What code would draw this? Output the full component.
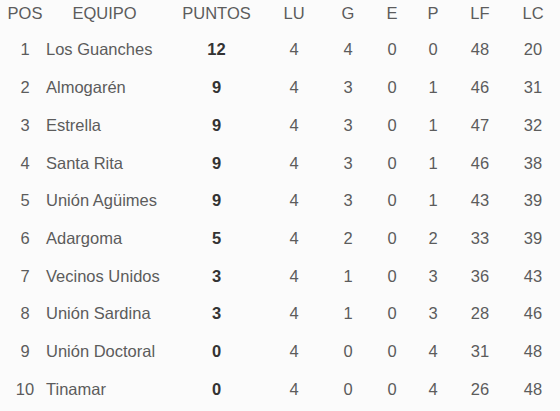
import React from "react";

type Row = {
  pos: number;
  team: string;
  pts: number;
  lu: number;
  g: number;
  e: number;
  p: number;
  lf: number;
  lc: number;
};

const rows: Row[] = [
  { pos: 1, team: "Los Guanches", pts: 12, lu: 4, g: 4, e: 0, p: 0, lf: 48, lc: 20 },
  { pos: 2, team: "Almogarén", pts: 9, lu: 4, g: 3, e: 0, p: 1, lf: 46, lc: 31 },
  { pos: 3, team: "Estrella", pts: 9, lu: 4, g: 3, e: 0, p: 1, lf: 47, lc: 32 },
  { pos: 4, team: "Santa Rita", pts: 9, lu: 4, g: 3, e: 0, p: 1, lf: 46, lc: 38 },
  { pos: 5, team: "Unión Agüimes", pts: 9, lu: 4, g: 3, e: 0, p: 1, lf: 43, lc: 39 },
  { pos: 6, team: "Adargoma", pts: 5, lu: 4, g: 2, e: 0, p: 2, lf: 33, lc: 39 },
  { pos: 7, team: "Vecinos Unidos", pts: 3, lu: 4, g: 1, e: 0, p: 3, lf: 36, lc: 43 },
  { pos: 8, team: "Unión Sardina", pts: 3, lu: 4, g: 1, e: 0, p: 3, lf: 28, lc: 46 },
  { pos: 9, team: "Unión Doctoral", pts: 0, lu: 4, g: 0, e: 0, p: 4, lf: 31, lc: 48 },
  { pos: 10, team: "Tinamar", pts: 0, lu: 4, g: 0, e: 0, p: 4, lf: 26, lc: 48 },
];

const cols =
  "grid grid-cols-[40px_119px_105px_50px_58px_30px_52px_42px_64px] items-center";

export default function App() {
  return (
    <div
      className="w-[560px] h-[411px] overflow-hidden bg-[#fbfbfb] pl-[5px] text-[16.5px] text-[#5c5c5c]"
      style={{ fontFamily: '"Liberation Sans", Arial, sans-serif' }}
    >
      {/* header */}
      <div className={`${cols} h-[26px] text-center`}>
        <span>POS</span>
        <span>EQUIPO</span>
        <span>PUNTOS</span>
        <span>LU</span>
        <span>G</span>
        <span>E</span>
        <span>P</span>
        <span>LF</span>
        <span>LC</span>
      </div>

      <div className="mt-[5px]">
        {rows.map((r) => (
          <div key={r.pos} className={`${cols} h-[37.7px] text-center`}>
            <span>{r.pos}</span>
            <span className="text-left pl-[1px] whitespace-nowrap">{r.team}</span>
            <span className="font-bold text-[#333333]">{r.pts}</span>
            <span>{r.lu}</span>
            <span>{r.g}</span>
            <span>{r.e}</span>
            <span>{r.p}</span>
            <span>{r.lf}</span>
            <span>{r.lc}</span>
          </div>
        ))}
      </div>
    </div>
  );
}
